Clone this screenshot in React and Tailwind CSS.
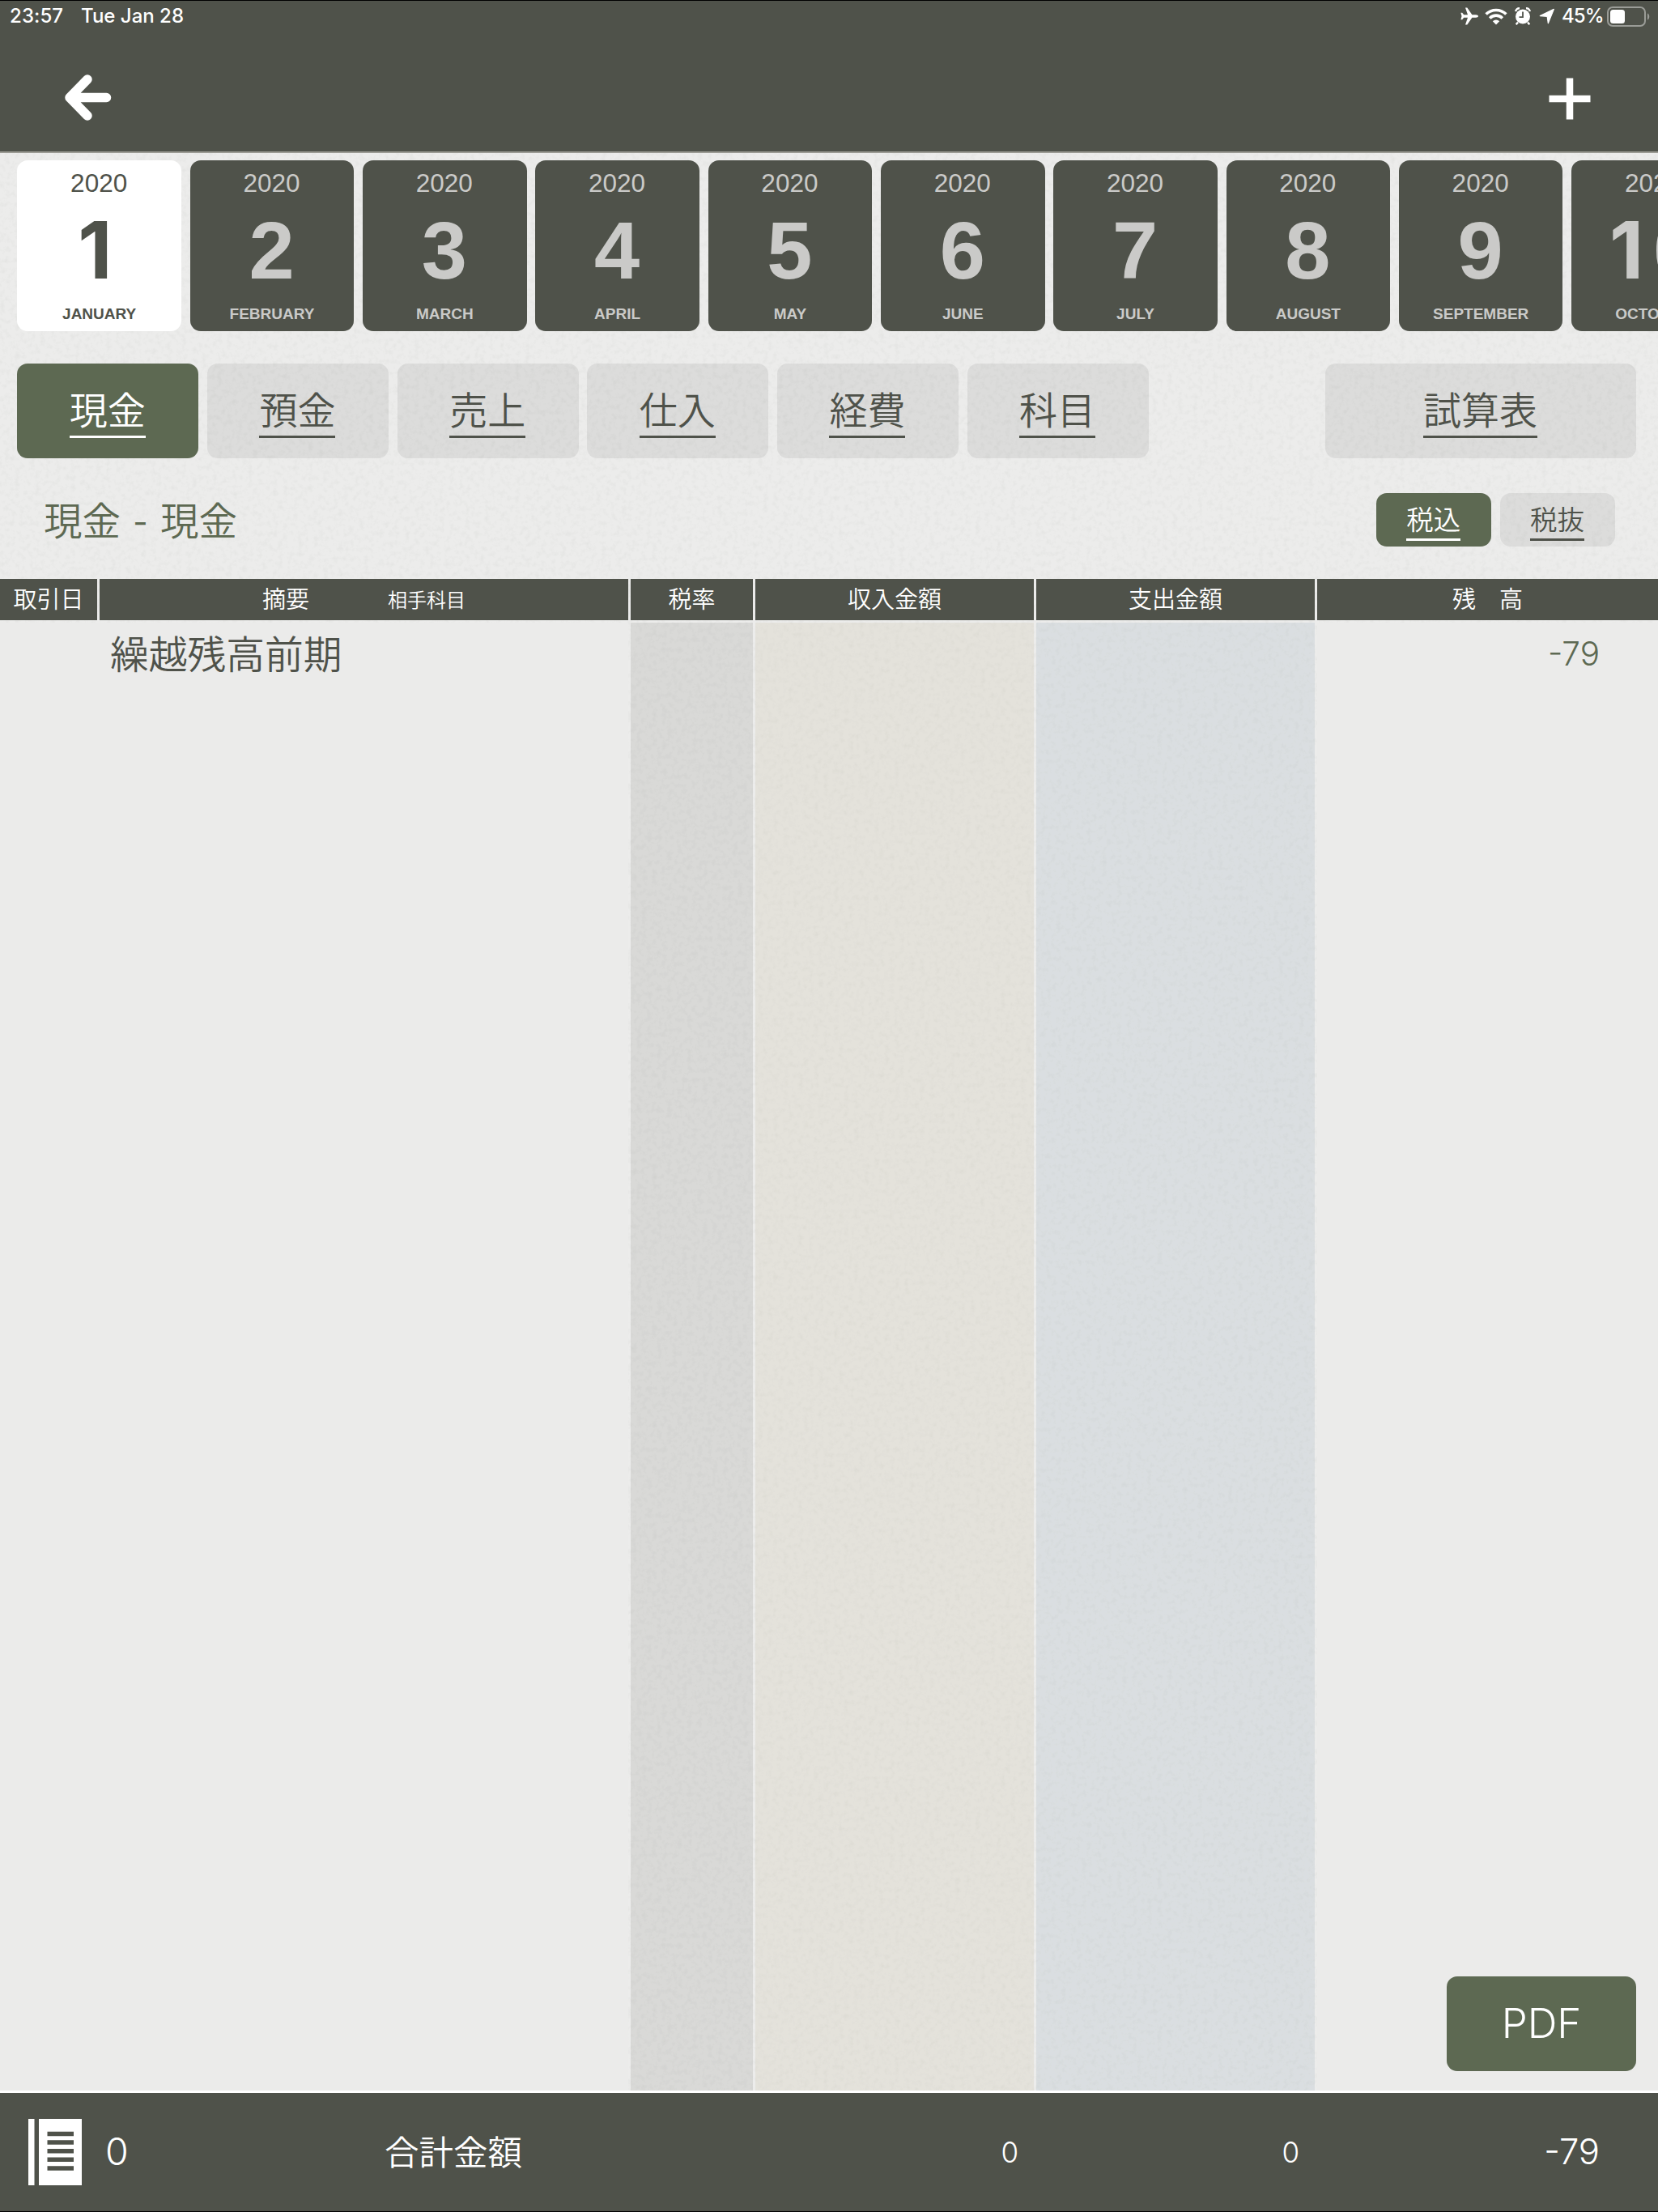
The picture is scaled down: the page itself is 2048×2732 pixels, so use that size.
import React from "react";

const MONTHS = ["JANUARY", "FEBRUARY", "MARCH", "APRIL", "MAY", "JUNE", "JULY", "AUGUST", "SEPTEMBER", "OCTOBER"];
const TABS = ["現金", "預金", "売上", "仕入", "経費", "科目"];

function PaperTexture() {
  return (
    <svg className="pointer-events-none absolute inset-0 h-full w-full" aria-hidden="true">
      <filter id="grain" x="0" y="0" width="100%" height="100%">
        <feTurbulence type="fractalNoise" baseFrequency="0.16" numOctaves="3" seed="4" stitchTiles="stitch" />
        <feColorMatrix values="0 0 0 0 0.45  0 0 0 0 0.47  0 0 0 0 0.44  0 0 0 -0.9 0.5" />
      </filter>
      <rect width="100%" height="100%" filter="url(#grain)" opacity="0.32" />
    </svg>
  );
}

function StatusBar() {
  return (
    <div className="flex h-[38px] items-center justify-between pl-[12px] pr-[10px] font-['Inter'] text-[24px] font-medium text-white">
      <div className="flex whitespace-nowrap">
        <span className="w-[88px] tracking-[0.1px]">23:57</span>
        <span>Tue Jan 28</span>
      </div>
      <div className="flex items-center">
        <svg className="h-[22px] w-[22px]" viewBox="0 0 22 22" fill="#fff">
          <path d="M22 11c0-1-1.400-1.700-3-1.700h-4.600L8.300.6H6l3 8.700H4.200L2.200 6.700H.4L1.500 11 .4 15.300h1.800l2-2.600H9l-3 8.700h2.300l6.100-8.700H19c1.600 0 3-.7 3-1.700z" />
        </svg>
        <svg className="ml-[8px] h-[22px] w-[28px]" viewBox="0 0 28 22" fill="none" stroke="#fff" strokeWidth="3.600">
          <path d="M1.600 8.600a17.500 17.500 0 0 1 24.800 0M6.200 13.400a11 11 0 0 1 15.600 0" />
          <path d="M14 21.500l-4.200-4.300a6 6 0 0 1 8.400 0z" fill="#fff" stroke="none" />
        </svg>
        <svg className="ml-[9px] h-[22px] w-[20px]" viewBox="0 0 20 22">
          <circle cx="10" cy="11.500" r="9" fill="#fff" />
          <path d="M1.200 5.200A4.500 4.500 0 0 1 6 1.300M18.800 5.200A4.500 4.500 0 0 0 14 1.300" stroke="#fff" strokeWidth="2.400" fill="none" />
          <path d="M4 18.500l-2.300 2.700M16 18.500l2.300 2.700" stroke="#fff" strokeWidth="2.400" fill="none" />
          <path d="M10 5.500V12.200H5.500" stroke="#4f524a" strokeWidth="1.800" fill="none" />
        </svg>
        <svg className="ml-[10px] h-[20px] w-[20px]" viewBox="0 0 20 20" fill="#fff" stroke="#fff" strokeWidth="1.200" strokeLinejoin="round">
          <path d="M18.300 1.400L11.300 18.700 10.200 10.300 1.300 9.600z" />
        </svg>
        <span className="ml-[8px] w-[51px] whitespace-nowrap tracking-[-0.9px]">45%</span>
        <svg className="ml-[5px] h-[25px] w-[53px]" viewBox="0 0 53 25">
          <rect x="1" y="1" width="46" height="23" rx="6" fill="none" stroke="#9a9c97" strokeWidth="2" />
          <rect x="4" y="4" width="18" height="17" rx="3.500" fill="#fff" />
          <path d="M50 8.500c3 1 3 7 0 8z" fill="#9a9c97" />
        </svg>
      </div>
    </div>
  );
}

function MonthCard({ n, name, active }) {
  return (
    <div className={"flex h-[210.500px] w-[202.670px] shrink-0 flex-col items-center rounded-[13px] " + (active ? "bg-white text-[#4f524a]" : "bg-[#4f524a] text-[#cacac8]")}>
      <span className="mr-px mt-[12px] text-[31.500px] leading-[32px]">2020</span>
      <span className="mr-px mt-[16px] flex text-[101px] font-bold leading-[102px]">
        {String(n).split("").map((d, i) =>
          d === "1" ? (
            <span key={i} className="w-[56px] pl-[2px] font-['Inter'] text-[98px]">{d}</span>
          ) : (
            <span key={i}>{d}</span>
          )
        )}
      </span>
      <span className="mt-[17px] text-[19px] font-bold leading-[22px]">{name}</span>
    </div>
  );
}

function Tab({ label, active, className }) {
  return (
    <div className={"flex justify-center rounded-[13px] " + className + (active ? " bg-[#5d6952] text-white" : " bg-[#4f524a]/10 text-[#4f524a]")}>
      <span className="mr-px border-b-[3px] border-current">{label}</span>
    </div>
  );
}

const HEAD = "flex items-center justify-center bg-[#4f524a] pt-[3px]";
const BIG_TAB = "h-[117px] pt-[29px] pb-[25px] leading-[60px]";
const SMALL_TAB = "h-[66px] w-[142px] pt-[11px] pb-[7px] leading-[45px]";

export default function App() {
  return (
    <div className="relative flex h-[2732px] w-[2048px] flex-col overflow-hidden bg-[#ececeb] font-['Liberation_Sans','Noto_Sans_CJK_JP',sans-serif] text-[#4f524a]">
      <PaperTexture />
      <header className="relative h-[189px] border-b-2 border-t border-b-[#9b9b94] border-t-black bg-[#4f524a]">
        <StatusBar />
        <div className="flex justify-between pl-[79px] pr-[83px] pt-[52px]">
          <svg className="h-[60px] w-[60px]" viewBox="0 0 60 60" fill="none" stroke="#fff" strokeWidth="11.500" strokeLinecap="round" strokeLinejoin="round">
            <path d="M52.500 29.500H8M29 7L7 29.500 29 52" />
          </svg>
          <svg className="mt-[5px] h-[52px] w-[52px]" viewBox="0 0 52 52" stroke="#fff" strokeWidth="8.500">
            <path d="M.5 26h51M26 .5v51" />
          </svg>
        </div>
      </header>

      <div className="relative ml-[21.330px] mt-[9px] flex gap-[10.670px]">
        {MONTHS.map((m, i) => (
          <MonthCard key={m} n={i + 1} name={m} active={i === 0} />
        ))}
      </div>

      <div className="relative ml-[21.330px] mr-[27px] mt-[40.500px] flex gap-[10.670px] text-[47px] font-[350]">
        {TABS.map((t, i) => (
          <Tab key={t} label={t} active={i === 0} className={BIG_TAB + " w-[224px]"} />
        ))}
        <Tab label="試算表" className={BIG_TAB + " ml-auto w-[384px]"} />
      </div>

      <div className="relative mt-[43px] flex h-[106px] items-start pl-[54px] pr-[53px] font-[350]">
        <div className="flex pt-[2px] text-[47.500px] leading-[68px] text-[#5d6952]">
          現金<span className="w-[49px] whitespace-pre text-center font-['Inter'] font-normal text-[40px]"> - </span>現金
        </div>
        <div className="ml-auto flex gap-[10.670px] text-[33.500px]">
          <Tab label="税込" active className={SMALL_TAB} />
          <Tab label="税抜" className={SMALL_TAB} />
        </div>
      </div>

      <div className="relative grid h-[51px] grid-cols-[120px_653px_151px_344px_344px_421px] gap-x-[3px] text-[29px] font-[350] text-white">
        <div className={HEAD}>取引日</div>
        <div className="flex items-center bg-[#4f524a] pl-[201px] pt-[3px]">
          <span className="w-[155px]">摘要</span>
          <span className="text-[24px]">相手科目</span>
        </div>
        <div className={HEAD}>税率</div>
        <div className={HEAD}>収入金額</div>
        <div className={HEAD}>支出金額</div>
        <div className={HEAD}>残　高</div>
      </div>

      <div className="relative mt-[3px] grid h-[1813px] grid-cols-[776px_151px_344px_344px_421px] gap-x-[3px]">
        <div className="bg-[#ebebea] pl-[136px] pt-[7px] text-[47.750px] font-[350] leading-[68px]">繰越残高前期</div>
        <div className="bg-[#4f524a]/12" />
        <div className="bg-[#cabea6]/22" />
        <div className="bg-[#a5b5c0]/24" />
        <div className="flex flex-col justify-between bg-[#ebebea] pb-[24px] pr-[27px] pt-[15px] font-['Inter']">
          <span className="pr-[45px] text-right text-[40.500px] font-light leading-[48px] text-[#5d6952]">-79</span>
          <div className="flex h-[117px] w-[234px] items-center justify-center self-end rounded-[13px] bg-[#5d6952] text-[51px] font-light text-white">PDF</div>
        </div>
      </div>

      <footer className="relative flex h-[150px] items-center border-b border-t-[3px] border-b-black border-t-white bg-[#4f524a] pl-[35px] pr-[72px] font-['Inter','Noto_Sans_CJK_JP',sans-serif] font-light text-white">
        <svg className="h-[82px] w-[66px]" viewBox="0 0 66 82">
          <path d="M0 0h7.500v82H0zM13 0h53v82H13z" fill="#fff" />
          <path d="M23.500 18.500h32.500M23.500 29h32.500M23.500 39.700h32.500M23.500 50.300h32.500M23.500 61h32.500" stroke="#4f524a" strokeWidth="5.600" />
        </svg>
        <span className="ml-[29px] w-[345px] text-[46.500px]">0</span>
        <span className="-mt-[4px] w-[598px] font-['Noto_Sans_CJK_JP'] text-[42.500px] font-[350]">合計金額</span>
        <span className="w-[185px] text-right text-[35px]">0</span>
        <span className="w-[347px] text-right text-[35px]">0</span>
        <span className="ml-auto text-[43.500px]">-79</span>
      </footer>
    </div>
  );
}
